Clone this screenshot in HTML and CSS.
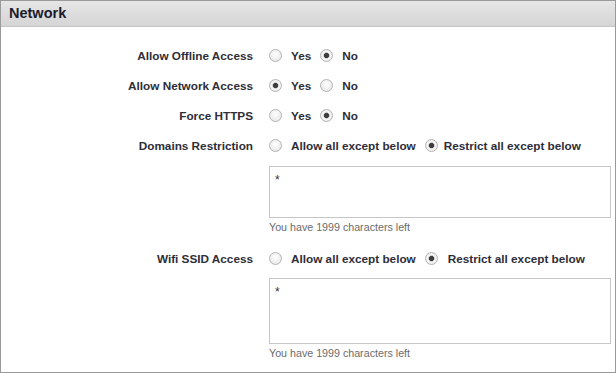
FILE: index.html
```html
<!DOCTYPE html>
<html lang="en">
<head>
    <meta charset="UTF-8">
    <title>Network</title>
    <link rel="stylesheet" href="styles.css">
</head>
<body>
<div class="panel">
    <div class="panelHead">Network</div>
    <form class="settings">
        <div class="row">
            <label class="rowLabel">Allow Offline Access</label>
            <div class="choices">
                <label class="choice"><input type="radio" name="offline"> Yes</label>
                <label class="choice"><input type="radio" name="offline" checked> No</label>
            </div>
        </div>
        <div class="row">
            <label class="rowLabel">Allow Network Access</label>
            <div class="choices">
                <label class="choice"><input type="radio" name="network" checked> Yes</label>
                <label class="choice"><input type="radio" name="network"> No</label>
            </div>
        </div>
        <div class="row">
            <label class="rowLabel">Force HTTPS</label>
            <div class="choices">
                <label class="choice"><input type="radio" name="https"> Yes</label>
                <label class="choice"><input type="radio" name="https" checked> No</label>
            </div>
        </div>
        <div class="row">
            <label class="rowLabel">Domains Restriction</label>
            <div class="choices">
                <label class="choice"><input type="radio" name="domains"> Allow all except below</label>
                <label class="choice narrow"><input type="radio" name="domains" checked> Restrict all except below</label>
            </div>
        </div>
        <div class="fieldRow">
            <div></div>
            <div class="field">
                <textarea class="listBox short" name="domainList">*</textarea>
                <div class="charsLeft">You have 1999 characters left</div>
            </div>
        </div>
        <div class="row wifiRow">
            <label class="rowLabel">Wifi SSID Access</label>
            <div class="choices">
                <label class="choice"><input type="radio" name="wifi"> Allow all except below</label>
                <label class="choice wide"><input type="radio" name="wifi" checked> Restrict all except below</label>
            </div>
        </div>
        <div class="fieldRow">
            <div></div>
            <div class="field tight">
                <textarea class="listBox tall" name="wifiList">*</textarea>
                <div class="charsLeft">You have 1999 characters left</div>
            </div>
        </div>
    </form>
</div>
</body>
</html>
```

FILE: styles.css
```css
body{
    margin: 0;
    background-color: white;
    font-family: 'Liberation Sans', Arial, sans-serif;
}
.panel{
    box-sizing: border-box;
    width: 616px;
    height: 373px;
    border: 1px solid #9a9a9a;
    background-color: white;
}
.panelHead{
    height: 25px;
    padding-left: 8px;
    line-height: 25px;
    font-size: 14.5px;
    font-weight: bold;
    color: #1c1c2c;
    background: linear-gradient(#e6e6e6, #d5d5d5);
    border-bottom: 1px solid #c6c6c6;
}
.settings{
    padding-top: 13px;
}
.row, .fieldRow{
    display: grid;
    grid-template-columns: 252px 345px;
    column-gap: 16px;
}
.row{
    height: 30px;
    align-items: center;
}
.rowLabel{
    text-align: right;
    font-size: 11.75px;
    font-weight: bold;
    color: #2e2e38;
}
.choices{
    display: flex;
    align-items: center;
    gap: 9px;
}
.choice{
    display: flex;
    align-items: center;
    gap: 9px;
    font-size: 11.75px;
    font-weight: bold;
    color: #2e2e38;
}
.choice.narrow{
    gap: 6px;
}
.wifiRow{
    margin-top: 9px;
}
.wifiRow .choice.wide{
    gap: 10px;
}
.choice input{
    appearance: none;
    -webkit-appearance: none;
    box-sizing: border-box;
    width: 13px;
    height: 13px;
    margin: 0;
    border: 1px solid #b4b4b4;
    border-radius: 50%;
    background: radial-gradient(circle at 50% 40%, #ffffff, #e2e2e2);
}
.choice input:checked{
    background: radial-gradient(circle, #3c3c3c 0, #3c3c3c 2.2px, #c8c8c8 2.9px, #f6f6f6 3.6px, #e2e2e2 100%);
}
.field{
    padding-top: 6px;
}
.field.tight{
    padding-top: 5px;
}
.listBox{
    display: block;
    box-sizing: border-box;
    width: 342px;
    margin: 0;
    padding: 6px 5px;
    border: 1px solid #c6c6c6;
    resize: none;
    font-family: 'Liberation Sans', Arial, sans-serif;
    font-size: 12px;
    color: #3a2a44;
    outline: none;
}
.short{
    height: 52px;
}
.tall{
    height: 66px;
}
.charsLeft{
    margin-top: 3px;
    font-size: 10.7px;
    line-height: 13px;
    color: #6c6c6c;
}
```
